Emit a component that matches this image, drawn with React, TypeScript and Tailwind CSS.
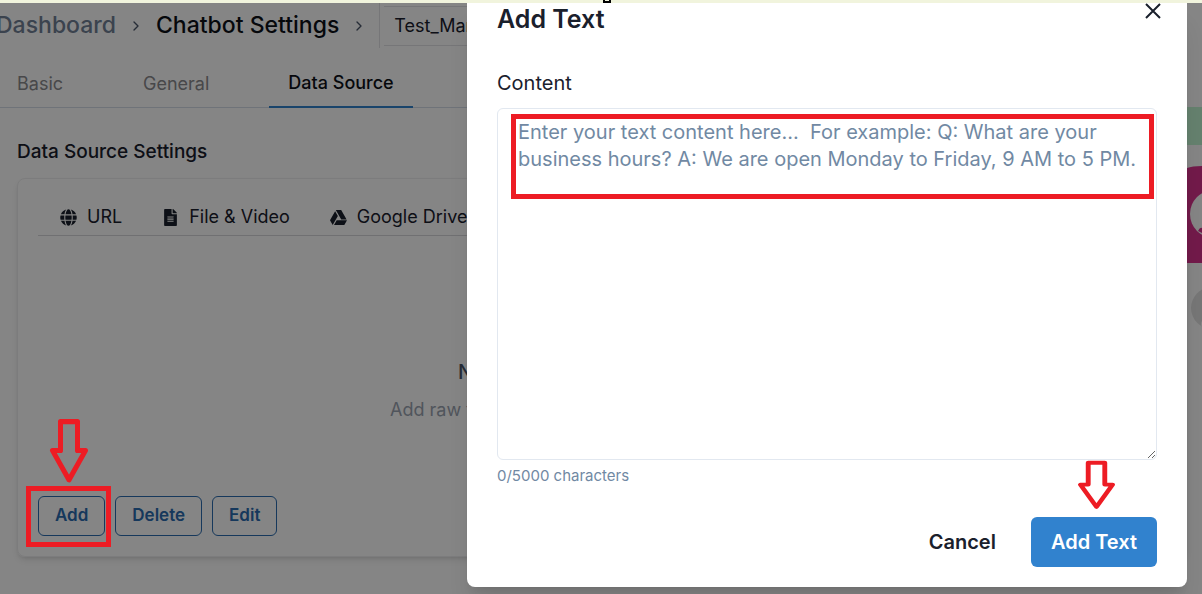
import React from 'react';
import { FaFileAlt, FaGlobe, FaGoogleDrive } from 'react-icons/fa';
import { ChevronRight } from 'lucide-react';

const tabs = ['Basic', 'General', 'Data Source'];

const sources = [
  { label: 'URL', icon: FaGlobe },
  { label: 'File & Video', icon: FaFileAlt },
  { label: 'Google Drive', icon: FaGoogleDrive },
];

const actions = ['Add', 'Delete', 'Edit'];

const DownArrow: React.FC<{ className: string }> = ({ className }) => (
  <svg className={className} viewBox="0 0 40 64" fill="none" preserveAspectRatio="none" aria-hidden="true">
    <path
      d="M11.5 3.500h17v28h8L20 60 3.500 31.500h8z"
      stroke="#ed1c24"
      strokeWidth="5"
      strokeLinejoin="round"
    />
  </svg>
);

const Breadcrumb = () => (
  <nav className="flex h-[45px] items-center text-[23px] font-medium whitespace-nowrap">
    <a href="#dashboard" className="-ml-1 text-[#718096]">Dashboard</a>
    <ChevronRight className="mx-3 h-4 w-4 text-[#4a5568]" />
    <a href="#chatbot" className="text-[#0d1117]">Chatbot Settings</a>
    <ChevronRight className="mx-3 h-4 w-4 text-[#4a5568]" />
    <div className="flex h-full items-center border-l border-[#e2e2e6] pl-1">
      <button className="h-10 w-60 border-y border-[#e2e2e6] px-[10px] text-left text-lg font-normal text-[#1a202c]">
        Test_Man
      </button>
    </div>
  </nav>
);

const SettingsPage = () => (
  <main className="min-w-0 flex-1">
    <Breadcrumb />
    <div className="flex h-[60px] gap-10 border-b border-[#d5dde8]">
      {tabs.map((tab) => (
        <button
          key={tab}
          className={
            tab === 'Data Source'
              ? '-mb-px border-b-2 border-[#3182ce] px-[19px] pt-3 text-lg font-medium text-[#0d1117]'
              : 'px-5 pt-3 text-lg text-[#8a8a8e] first:-ml-[3px]'
          }
        >
          {tab}
        </button>
      ))}
    </div>

    <div className="pt-7 pl-[17px]">
      <h2 className="text-[19px] leading-8 font-medium text-[#1a202c]">Data Source Settings</h2>
      <section className="mt-[10px] rounded-lg border border-[#eeeeef] p-5 shadow-md">
        <div className="flex border-b border-[#d6d6da] pt-1 pb-1 pl-0.5">
          {sources.map(({ label, icon: Icon }) => (
            <button key={label} className="flex items-center gap-[10px] px-5 text-lg whitespace-nowrap text-[#1a202c]">
              <Icon className="h-[17px] w-[17px]" />
              {label}
            </button>
          ))}
        </div>
        <div className="h-[260px] pt-[120px] pl-[352px] whitespace-nowrap">
          <p className="pl-[68px] text-xl leading-8 font-medium text-[#4a5568]">No</p>
          <p className="mt-2 text-lg leading-7 text-[#9aa3b0]">Add raw text</p>
        </div>
        <div className="flex gap-[10px]">
          {actions.map((action) => (
            <button
              key={action}
              className="h-10 rounded-md border border-[#2b6cb0] px-4 text-[17px] font-semibold text-[#2b6cb0]"
            >
              {action}
            </button>
          ))}
        </div>
      </section>
    </div>
  </main>
);

// Only the left edge of the chat preview shows beside the dialog
const PreviewRail = () => (
  <aside className="w-[15px] overflow-hidden pt-[104px]">
    <div className="h-[38px] bg-[#c2f7d4]" />
    <svg className="mt-[21px]" width="15" height="165" viewBox="0 0 15 165" aria-hidden="true">
      <path d="M0 2Q5 0 15 0v97H0z" fill="#da328f" />
      <circle cx="27" cy="48" r="24" fill="#fff" />
      <path d="M11 65q2-4 4-3v5z" fill="#da328f" />
      <circle cx="25" cy="142" r="21" fill="#e3e3e3" />
      <circle cx="18" cy="158" r="4" fill="#fff" />
    </svg>
  </aside>
);

const AddTextDialog = () => (
  <div
    role="dialog"
    aria-labelledby="dialog-title"
    className="w-[720px] rounded-b-lg bg-white px-[30px] pb-5 shadow-xl"
  >
    <header className="flex items-start justify-between">
      <h1 id="dialog-title" className="text-[25px] leading-8 font-semibold text-[#1a202c]">Add Text</h1>
      <button aria-label="Close" className="-mr-3 p-2 pt-0 text-[#1a202c]">
        <svg width="16" height="16" viewBox="0 0 16 16" fill="none" stroke="currentColor" strokeWidth="2" aria-hidden="true">
          <path d="M1 1l14 14M15 1L1 15" />
        </svg>
      </button>
    </header>
    <label htmlFor="content" className="mt-8 block text-xl leading-8 text-[#1a202c]">Content</label>
    <div className="relative mt-[9px]">
      <textarea
        id="content"
        className="block h-[352px] w-full rounded-md border border-[#e2e8f0] py-[10px] pr-3 pl-5 text-xl leading-[27px] placeholder:text-[#7189a3]"
        placeholder="Enter your text content here...  For example: Q: What are your business hours? A: We are open Monday to Friday, 9 AM to 5 PM."
      />
      <div className="pointer-events-none absolute top-[6px] right-[3px] left-[14px] h-[85px] border-[5px] border-[#ed1c24]" />
    </div>
    <p className="mt-1 text-[15px] leading-6 text-[#7189a3]">0/5000 characters</p>
    <footer className="relative mt-[29px] flex justify-end gap-[15px] text-xl font-semibold">
      <button className="h-[50px] px-5 text-[#1a202c]">Cancel</button>
      <button className="h-[50px] rounded-md bg-[#3182ce] px-5 text-white">Add Text</button>
      <DownArrow className="pointer-events-none absolute right-[41px] bottom-[57px] h-[50px] w-[39px]" />
    </footer>
  </div>
);

export default function App() {
  return (
    <div className="relative min-h-screen overflow-hidden bg-white font-['Inter',sans-serif]">
      <div className="relative z-10 flex h-[3px] justify-center overflow-hidden bg-[#f1f4dd]">
        <span className="ml-3 h-[3px] w-2 border-2 border-t-0 border-black" />
      </div>
      <div className="flex">
        <SettingsPage />
        <PreviewRail />
      </div>
      <div className="absolute inset-0 flex items-start justify-end bg-black/48 pt-[3px] pr-[15px]">
        <AddTextDialog />
      </div>

      {/* Callout around the Add button */}
      <div className="pointer-events-none absolute top-[418px] left-[26px] flex w-[85px] flex-col items-center">
        <DownArrow className="h-[66px] w-10" />
        <div className="mt-[2px] h-[61px] w-full border-[5px] border-[#ed1c24]" />
      </div>
    </div>
  );
}
